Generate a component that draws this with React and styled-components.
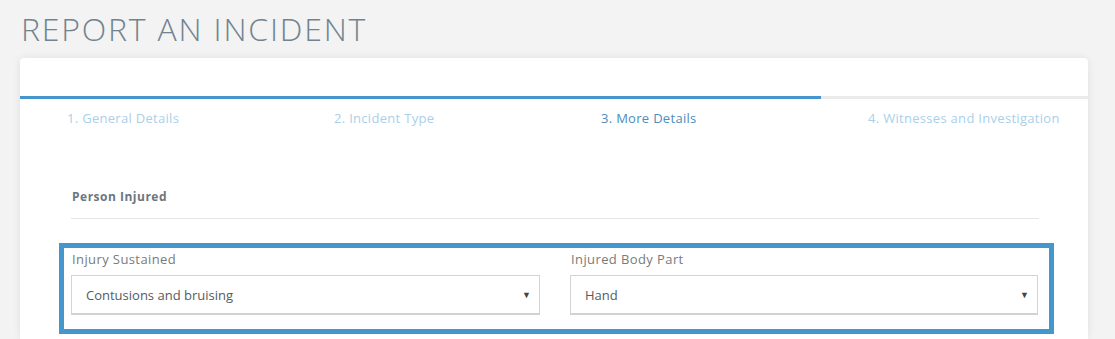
import React from 'react';
import styled, { createGlobalStyle } from 'styled-components';

const GlobalStyle = createGlobalStyle`
  body {
    margin: 0;
    background: #f3f3f3;
    font-family: 'Open Sans', 'Liberation Sans', sans-serif;
  }
`;

const steps = ['1. General Details', '2. Incident Type', '3. More Details', '4. Witnesses and Investigation'];
const current = 2;

const fields = [
  { label: 'Injury Sustained', value: 'Contusions and bruising' },
  { label: 'Injured Body Part', value: 'Hand' },
];

const App = () => {
  return (
    <Page>
      <GlobalStyle />
      <Title>REPORT AN INCIDENT</Title>
      <Card>
        <Progress>
          <ProgressFill style={{ width: `${((current + 1) / steps.length) * 100}%` }} />
        </Progress>
        <Steps>
          {steps.map((s, i) => (
            <Step key={s} $active={i === current}>
              {s}
            </Step>
          ))}
        </Steps>
        <Body>
          <SectionTitle>Person Injured</SectionTitle>
          <Highlight>
            {fields.map((f) => (
              <Field key={f.label}>
                <Label>{f.label}</Label>
                <Select>
                  <span>{f.value}</span>
                  <Arrow>▼</Arrow>
                </Select>
              </Field>
            ))}
          </Highlight>
        </Body>
      </Card>
    </Page>
  );
};
export default App;

const Page = styled.div`
  height: 339px;
  padding: 0 27px 0 20px;
  box-sizing: border-box;
  overflow: hidden;
  display: flex;
  flex-direction: column;
`;
const Title = styled.h1`
  margin: 0;
  padding: 10px 0 0 1px;
  height: 58px;
  box-sizing: border-box;
  font-weight: 300;
  font-size: 32px;
  line-height: 38px;
  letter-spacing: 1.8px;
  color: #72838f;
`;
const Card = styled.div`
  flex: 1;
  background: #ffffff;
  border-radius: 4px 4px 0 0;
  box-shadow: 0 0 8px rgba(0, 0, 0, 0.08);
  padding-top: 38px;
`;
const Progress = styled.div`
  height: 3px;
  background: #ebebeb;
`;
const ProgressFill = styled.div`
  height: 100%;
  background: #4596cc;
`;
const Steps = styled.div`
  display: grid;
  grid-template-columns: repeat(4, 1fr);
  height: 37px;
  align-items: center;
`;
const Step = styled.div`
  padding-left: 47px;
  font-size: 13px;
  letter-spacing: 0.3px;
  color: ${(p) => (p.$active ? '#4b8dbd' : '#a9d0ea')};
  white-space: nowrap;
`;
const Body = styled.div`
  padding: 0 49px 0 39px;
`;
const SectionTitle = styled.div`
  margin: 0 0 0 12px;
  padding: 52px 0 13px 1px;
  font-size: 12px;
  font-weight: 700;
  letter-spacing: 0.5px;
  color: #6b7680;
  border-bottom: 1px solid #e6e6e6;
`;
const Highlight = styled.div`
  margin: 24px -15px 0 0;
  border: 5px solid #4596cc;
  display: grid;
  grid-template-columns: 469px 468px;
  gap: 30px;
  padding: 2px 11px 14px 7px;
`;
const Field = styled.div`
  display: flex;
  flex-direction: column;
`;
const Label = styled.div`
  font-size: 13px;
  letter-spacing: 0.4px;
  color: #7a7a7a;
  margin-bottom: 7px;
  padding-left: 1px;
`;
const Select = styled.div`
  height: 40px;
  box-sizing: border-box;
  border: 1px solid #d4d4d4;
  border-bottom: 2px solid #d2d2d2;
  display: flex;
  align-items: center;
  justify-content: space-between;
  padding: 0 8px 0 14px;
  font-size: 13px;
  color: #555b60;
`;
const Arrow = styled.span`
  font-size: 9px;
  color: #444;
`;
